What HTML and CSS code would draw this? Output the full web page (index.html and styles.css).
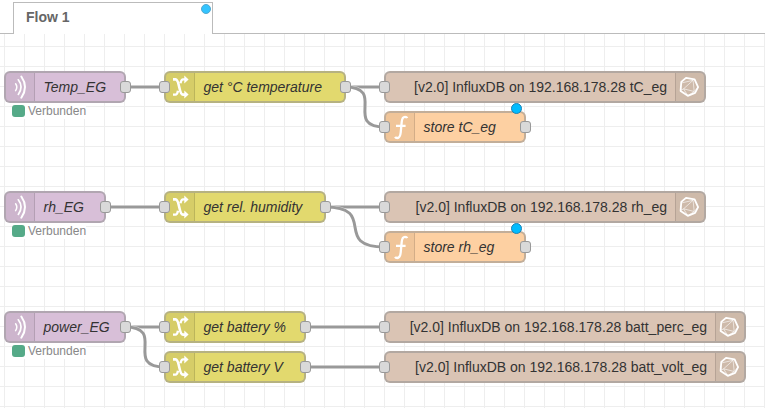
FILE: index.html
```html
<!DOCTYPE html>
<html lang="en">
<head>
<meta charset="utf-8">
<title>Flow 1</title>
<link rel="stylesheet" href="styles.css">
</head>
<body>
<svg class="defs" width="0" height="0">
  <symbol id="i-mqtt" viewBox="0 0 30 30"><g fill="none" stroke="#fff" stroke-linecap="round"><path d="M10.6 11.8Q13 15 10.6 18.6" stroke-width="1.5"/><path d="M13.3 7.8Q18.8 15 13.3 22.4" stroke-width="1.7"/><path d="M16.3 4.5Q23.7 15 16.3 25.7" stroke-width="2"/></g></symbol>
  <symbol id="i-change" viewBox="0 0 30 30"><path d="M8 7.4H10.5C14.8 7.4 13.6 22.6 18 22.6H20.5" fill="none" stroke="#fff" stroke-width="2.6"/><path d="M8 22.6H10.5C12 22.6 12.6 20.8 13 18.8M15.4 11.2C15.9 9.2 16.6 7.4 18 7.4H20.5" fill="none" stroke="#fff" stroke-width="2.4"/><path d="M19.3 3.4 23.6 7.4 19.3 11.4ZM19.3 18.6 23.6 22.6 19.3 26.6Z" fill="#fff"/></symbol>
  <symbol id="i-func" viewBox="0 0 30 30"><path d="M22.2 6.1Q21.7 4.9 20 4.9C17.3 4.9 17 7 16.7 10L15.7 20.5C15.3 24.5 14.4 26 12.3 26Q10.7 26 10.1 24.9M11 13.8H20.6" fill="none" stroke="#fff" stroke-width="2.3"/></symbol>
  <symbol id="i-influx" viewBox="0 0 30 30"><path d="M11.5 5.9 20.1 7.4 23.6 15.1 20.6 20.8 13.3 23.8 6.1 18.9 6.8 9.9Z" fill="none" stroke="#fff" stroke-width="1.8" stroke-linejoin="round"/><path d="M18.6 8.3 9.1 16.8 19.7 19.5ZM6.8 11 18.6 8.3M9.1 16.8 6.2 18.5M9.1 16.8 13.3 23.8 19.7 19.5 23.6 15.1" fill="none" stroke="#fff" stroke-opacity=".75" stroke-width=".8"/></symbol>
</svg>
<header class="tabs">
  <div class="tab">Flow 1<span class="dot tab-dot"></span></div>
</header>
<main class="canvas">
  <svg class="wires" width="765" height="374" viewBox="0 34 765 374">
    <g><path class="outline" d="M125 87H165"/><path d="M125 87H165"/></g>
    <g><path class="outline" d="M345 87H385"/><path d="M345 87H385"/></g>
    <g><path class="outline" d="M345 87C387.4 87 342.6 127 385 127"/><path d="M345 87C387.4 87 342.6 127 385 127"/></g>
    <g><path class="outline" d="M105 207H165"/><path d="M105 207H165"/></g>
    <g><path class="outline" d="M325 207H385"/><path d="M325 207H385"/></g>
    <g><path class="outline" d="M325 207C379 207 331 247 385 247"/><path d="M325 207C379 207 331 247 385 247"/></g>
    <g><path class="outline" d="M125 327H165"/><path d="M125 327H165"/></g>
    <g><path class="outline" d="M125 327C167.4 327 122.6 367 165 367"/><path d="M125 327C167.4 327 122.6 367 165 367"/></g>
    <g><path class="outline" d="M305 327H385"/><path d="M305 327H385"/></g>
    <g><path class="outline" d="M305 367H385"/><path d="M305 367H385"/></g>
  </svg>

  <div class="node mqtt w120 c1 r1"><svg class="icon"><use href="#i-mqtt" width="30" height="30"/></svg><span class="label">Temp_EG</span><i class="port out"></i><div class="status"><i></i>Verbunden</div></div>
  <div class="node change w180 c2 r1"><svg class="icon"><use href="#i-change" width="30" height="30"/></svg><span class="label">get °C temperature</span><i class="port in"></i><i class="port out"></i></div>
  <div class="node influx w320 c3 r1"><span class="label">[v2.0] InfluxDB on 192.168.178.28 tC_eg</span><svg class="icon"><use href="#i-influx" width="30" height="30"/></svg><i class="port in"></i></div>
  <div class="node func w140 c3 r2"><svg class="icon"><use href="#i-func" width="30" height="30"/></svg><span class="label">store tC_eg</span><i class="port in"></i><i class="port out"></i><span class="dot node-dot"></span></div>

  <div class="node mqtt w100 c1 r3"><svg class="icon"><use href="#i-mqtt" width="30" height="30"/></svg><span class="label">rh_EG</span><i class="port out"></i><div class="status"><i></i>Verbunden</div></div>
  <div class="node change w160 c2 r3"><svg class="icon"><use href="#i-change" width="30" height="30"/></svg><span class="label">get rel. humidity</span><i class="port in"></i><i class="port out"></i></div>
  <div class="node influx w320 c3 r3"><span class="label">[v2.0] InfluxDB on 192.168.178.28 rh_eg</span><svg class="icon"><use href="#i-influx" width="30" height="30"/></svg><i class="port in"></i></div>
  <div class="node func w140 c3 r4"><svg class="icon"><use href="#i-func" width="30" height="30"/></svg><span class="label">store rh_eg</span><i class="port in"></i><i class="port out"></i><span class="dot node-dot"></span></div>

  <div class="node mqtt w120 c1 r5"><svg class="icon"><use href="#i-mqtt" width="30" height="30"/></svg><span class="label">power_EG</span><i class="port out"></i><div class="status"><i></i>Verbunden</div></div>
  <div class="node change w140 c2 r5"><svg class="icon"><use href="#i-change" width="30" height="30"/></svg><span class="label">get battery %</span><i class="port in"></i><i class="port out"></i></div>
  <div class="node change w140 c2 r6"><svg class="icon"><use href="#i-change" width="30" height="30"/></svg><span class="label">get battery V</span><i class="port in"></i><i class="port out"></i></div>
  <div class="node influx w360 c3 r5"><span class="label">[v2.0] InfluxDB on 192.168.178.28 batt_perc_eg</span><svg class="icon"><use href="#i-influx" width="30" height="30"/></svg><i class="port in"></i></div>
  <div class="node influx w360 c3 r6"><span class="label">[v2.0] InfluxDB on 192.168.178.28 batt_volt_eg</span><svg class="icon"><use href="#i-influx" width="30" height="30"/></svg><i class="port in"></i></div>
</main>
</body>
</html>
```
FILE: styles.css
```css
* { box-sizing: border-box; }
body {
  margin: 0;
  width: 765px;
  height: 408px;
  overflow: hidden;
  background: #fff;
  font: 14px/20px "Liberation Sans", Arial, sans-serif;
  color: #333;
  display: flex;
  flex-direction: column;
}
.defs { position: absolute; }
.tabs {
  height: 34px;
  flex: none;
  display: flex;
  align-items: flex-end;
  padding-left: 13px;
  box-shadow: inset 0 -1px #bbb;
}
.tab {
  position: relative;
  width: 200px;
  height: 32px;
  padding: 4px 12px;
  border: 1px solid #bbb;
  border-bottom: 0;
  background: #fff;
  color: #666;
  font-weight: bold;
}
.dot {
  position: absolute;
  border-radius: 50%;
  border: 1px solid #1c82b4;
  background: #00bcff;
}
.tab-dot { width: 10px; height: 10px; top: 1px; right: 1px; border-color: #53a9d0; background: #33c4ff; }
.node-dot { width: 11px; height: 11px; top: -10px; right: 2px; }
.canvas {
  position: relative;
  flex: 1;
  background-image:
    linear-gradient(90deg, #eee 1px, transparent 1px),
    linear-gradient(#eee 1px, transparent 1px);
  background-size: 20px 20px;
  background-position: 4px 12px;
}
.wires { position: absolute; left: 0; top: 0; fill: none; stroke: #999; stroke-width: 3; }
.wires .outline { stroke: #fff; stroke-width: 4; stroke-opacity: .6; }
.node {
  position: absolute;
  height: 32px;
  display: flex;
  border: 2px solid rgba(145, 145, 145, .55);
  border-radius: 6px;
}
.c1 { left: 4px; }
.c2 { left: 164px; }
.c3 { left: 384px; }
.r1 { top: 37px; }
.r2 { top: 77px; }
.r3 { top: 157px; }
.r4 { top: 197px; }
.r5 { top: 277px; }
.r6 { top: 317px; }
.w100 { width: 102px; }
.w120 { width: 122px; }
.w140 { width: 142px; }
.w160 { width: 162px; }
.w180 { width: 182px; }
.w320 { width: 322px; }
.w360 { width: 362px; }
.mqtt { background: #d8bfd8; }
.change { background: #e2d96e; }
.func { background: #fdd0a2; }
.influx { background: #dac4b4; }
.icon {
  width: 29px;
  height: 28px;
  flex: none;
  background: rgba(0, 0, 0, .05);
  border-right: 1px solid rgba(0, 0, 0, .12);
  border-radius: 4px 0 0 4px;
}
.icon use { transform: translate(-1px, -1px); }
.label { padding-left: 8.5px; line-height: 28px; white-space: nowrap; font-style: italic; }
.influx .label { flex: 1; padding: 0 8px 0 0; text-align: right; font-style: normal; }
.influx .icon { border-right: 0; border-left: 1px solid rgba(0, 0, 0, .12); border-radius: 0 4px 4px 0; }
.influx .icon use { transform: translate(-1.5px, -1px); }
.port {
  position: absolute;
  top: 8px;
  width: 11px;
  height: 12px;
  border: 1px solid #999;
  border-radius: 3px;
  background: #d9d9d9;
}
.in { left: -7px; }
.out { right: -7px; }
.status {
  position: absolute;
  left: 6px;
  top: 30px;
  display: flex;
  align-items: center;
  gap: 3px;
  height: 16px;
  font-size: 12px;
  line-height: 15px;
  color: #888;
  background: #fff;
}
.status i { width: 13px; height: 12px; border-radius: 3px; background: #5a8; }
```
